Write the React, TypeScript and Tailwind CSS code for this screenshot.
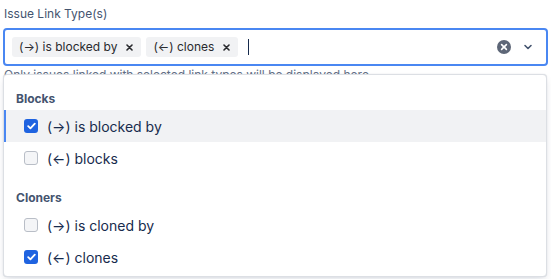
import React from 'react';

type Option = { label: string; checked: boolean; focused?: boolean };

const groups: { title: string; options: Option[] }[] = [
  {
    title: 'Blocks',
    options: [
      { label: '(→) is blocked by', checked: true, focused: true },
      { label: '(←) blocks', checked: false },
    ],
  },
  {
    title: 'Cloners',
    options: [
      { label: '(→) is cloned by', checked: false },
      { label: '(←) clones', checked: true },
    ],
  },
];

const Tag = ({ text }: { text: string }) => (
  <div className="flex h-[20px] items-center rounded-[3px] bg-[#f1f2f4] pl-[7px] pr-[8px] text-[12px] text-[#292a2e]">
    <span>{text}</span>
    <svg className="ml-[9px]" width="7" height="7" viewBox="0 0 7 7">
      <path d="M1 1l5 5M6 1L1 6" stroke="#292a2e" strokeWidth="1.6" strokeLinecap="round" />
    </svg>
  </div>
);

const Checkbox = ({ checked }: { checked: boolean }) =>
  checked ? (
    <div className="flex h-[14px] w-[14px] items-center justify-center rounded-[3px] bg-[#1f63e0]">
      <svg width="9" height="8" viewBox="0 0 9 8">
        <path d="M1.2 4.2l2.2 2.2L7.8 1.6" fill="none" stroke="white" strokeWidth="1.8" strokeLinecap="round" strokeLinejoin="round" />
      </svg>
    </div>
  ) : (
    <div className="h-[14px] w-[14px] rounded-[3px] border-[1.5px] border-[#b9bec7] bg-[#f4f5f7]" />
  );

export default function App() {
  return (
    <div className="relative h-[279px] w-[551px] bg-white px-[3px] pt-[6px] font-['Inter',sans-serif]">
      <div className="ml-px text-[12px] leading-4 text-[#44546f]">Issue Link Type(s)</div>

      {/* Select control */}
      <div className="mt-[6px] flex h-[38px] items-center rounded-[4px] border-2 border-[#4a87f2] bg-white pl-[7px] pr-[10px]">
        <div className="flex flex-1 items-center gap-[5px]">
          <Tag text="(→) is blocked by" />
          <Tag text="(←) clones" />
          <div className="ml-[5px] h-[16px] w-px bg-[#172b4d]" />
        </div>
        <div className="flex items-center gap-[8px]">
          <svg width="16" height="16" viewBox="0 0 16 16">
            <circle cx="8" cy="8" r="7" fill="#5d6677" />
            <path d="M5.6 5.6l4.8 4.8M10.4 5.6l-4.8 4.8" stroke="white" strokeWidth="1.6" strokeLinecap="round" />
          </svg>
          <svg width="16" height="16" viewBox="0 0 16 16">
            <path d="M5 6.5l3 3 3-3" fill="none" stroke="#44546f" strokeWidth="1.6" strokeLinecap="round" strokeLinejoin="round" />
          </svg>
        </div>
      </div>

      <div className="ml-px mt-[1px] text-[12px] leading-4 text-[#626f86]">
        Only issues linked with selected link types will be displayed here.
      </div>

      {/* Menu */}
      <div className="absolute left-[3px] right-[4px] top-[74px] h-[203px] overflow-hidden rounded-[4px] border border-[#dcdfe4] bg-white shadow-[0_4px_8px_-2px_rgba(9,30,66,0.15),0_0_1px_rgba(9,30,66,0.2)]">
        {groups.map((g) => (
          <div key={g.title} className="pt-[16px]">
            <div className="mb-[3px] pl-[12px] text-[12px] font-bold leading-4 text-[#44546f]">{g.title}</div>
            {g.options.map((o) => (
              <div
                key={o.label}
                className={`relative flex h-[32px] items-center gap-[9px] pl-[20px] text-[14px] text-[#172b4d] ${o.focused ? 'bg-[#f1f2f4]' : ''}`}
              >
                {o.focused && <div className="absolute bottom-0 left-0 top-0 w-[2px] bg-[#4a87f2]" />}
                <Checkbox checked={o.checked} />
                <span>{o.label}</span>
              </div>
            ))}
          </div>
        ))}
      </div>
    </div>
  );
}
